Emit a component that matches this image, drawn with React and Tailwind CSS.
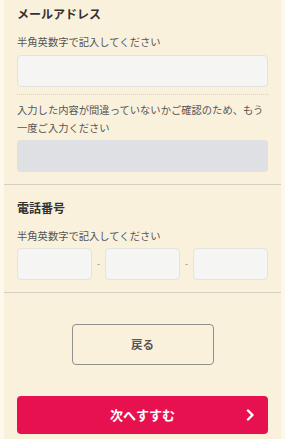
export default function App() {
  const font = { fontFamily: '"Noto Sans CJK JP", "Noto Sans", sans-serif' };
  return (
    <div className="min-h-[439px] bg-[#fdf8ec] px-[4px]" style={font}>
      <div className="bg-[#faf1dc] text-[#333]">
        <section className="px-[13px] pt-[4px] pb-[12px]">
          <h2 className="text-[12px] font-bold leading-[20px]">メールアドレス</h2>
          <p className="mt-[10px] text-[10.3px] leading-[16px] text-[#555]">半角英数字で記入してください</p>
          <div className="mt-[5px] h-[32px] rounded-[4px] border border-[#e2e2df] bg-[#f5f6f4]" />
          <div className="mt-[7px] border-t border-dotted border-[#d9d2bf]" />
          <p className="mt-[6px] whitespace-nowrap text-[10.3px] leading-[18px] text-[#555]">
            入力した内容が間違っていないかご確認のため、もう
            <br />
            一度ご入力ください
          </p>
          <div className="mt-[3px] h-[32px] rounded-[4px] bg-[#dfe0e3]" />
        </section>
        <div className="border-t border-[#d6d0c0]" />
        <section className="px-[13px] pt-[13px] pb-[12px]">
          <h2 className="text-[12px] font-bold leading-[20px]">電話番号</h2>
          <p className="mt-[10px] text-[10.3px] leading-[16px] text-[#555]">半角英数字で記入してください</p>
          <div className="mt-[4px] flex items-center">
            <div className="h-[32px] flex-1 rounded-[4px] border border-[#e2e2df] bg-[#f5f6f4]" />
            <span className="w-[13px] text-center text-[9px] text-[#888]">-</span>
            <div className="h-[32px] flex-1 rounded-[4px] border border-[#e2e2df] bg-[#f5f6f4]" />
            <span className="w-[13px] text-center text-[9px] text-[#888]">-</span>
            <div className="h-[32px] flex-1 rounded-[4px] border border-[#e2e2df] bg-[#f5f6f4]" />
          </div>
        </section>
        <div className="border-t border-[#d6d0c0]" />
        <div className="flex flex-col items-center px-[13px] pt-[31px] pb-[5px]">
          <button className="flex h-[41px] w-[142px] items-center justify-center rounded-[4px] border border-[#8f918b] text-[11.5px] font-bold text-[#555]">
            戻る
          </button>
          <button className="relative mt-[31px] flex h-[38px] w-full items-center justify-center rounded-[4px] bg-[#e8114f] text-[13px] font-bold text-white">
            次へすすむ
            <svg className="absolute right-[13px] top-1/2 -translate-y-1/2" width="9" height="12" viewBox="0 0 9 12" fill="none">
              <path d="M2 1.5 L6.5 6 L2 10.5" stroke="white" strokeWidth="2.4" strokeLinecap="round" strokeLinejoin="round" />
            </svg>
          </button>
        </div>
      </div>
    </div>
  );
}
